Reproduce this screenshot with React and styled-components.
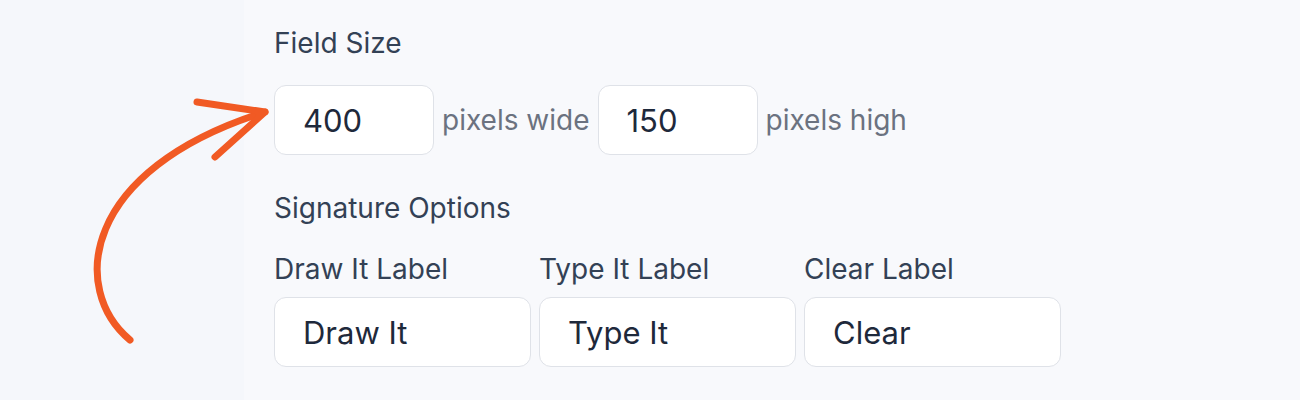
import React from 'react'
import styled, { createGlobalStyle } from 'styled-components'

const GlobalStyle = createGlobalStyle`
  html, body {
    margin: 0;
    padding: 0;
    background: #f8f9fc;
    font-family: Inter, "Noto Sans", sans-serif;
  }
`

const Page = styled.div`
  position: relative;
  display: flex;
  height: 400px;
  overflow: hidden;
`

const SidePane = styled.div`
  width: 244px;
  flex-shrink: 0;
  background: #f5f7fb;
`

const Main = styled.div`
  flex: 1;
  display: flex;
  flex-direction: column;
  padding: 26px 0 0 30px;
`

const Arrow = styled.svg`
  position: absolute;
  left: 0;
  top: 0;
  pointer-events: none;
`

const SectionLabel = styled.div`
  font-size: 28px;
  line-height: 34px;
  color: #334155;
  margin-top: ${(p) => p.$top || 0}px;
  margin-bottom: ${(p) => p.$gap || 0}px;
`

const Row = styled.div`
  display: flex;
  align-items: center;
  gap: 8px;
`

const Field = styled.div`
  display: flex;
  flex-direction: column;
  gap: 11px;
`

const Input = styled.input`
  box-sizing: border-box;
  width: ${(p) => p.$w}px;
  height: 70px;
  padding: 0 0 0 28px;
  border: 1.5px solid #dfe2e8;
  border-radius: 12px;
  background: #fff;
  font-family: Inter, "Noto Sans", sans-serif;
  font-size: 31px;
  color: #1e293b;
  outline: none;
`

const Unit = styled.span`
  font-size: 28px;
  color: #6b7280;
`

const Fields = styled.div`
  display: flex;
  gap: 8px;
  margin-top: 27px;
`

export default function App() {
  return (
    <>
      <GlobalStyle />
      <Page>
        <SidePane />
        <Main>
          <SectionLabel $gap={25}>Field Size</SectionLabel>
          <Row>
            <Input $w={160} defaultValue="400" />
            <Unit>pixels wide</Unit>
            <Input $w={160} defaultValue="150" />
            <Unit>pixels high</Unit>
          </Row>
          <SectionLabel $top={36}>Signature Options</SectionLabel>
          <Fields>
            {['Draw It', 'Type It', 'Clear'].map((name) => (
              <Field key={name}>
                <SectionLabel>{name} Label</SectionLabel>
                <Input $w={257} defaultValue={name} />
              </Field>
            ))}
          </Fields>
        </Main>
        <Arrow width="300" height="400" viewBox="0 0 300 400">
          <g fill="none" stroke="#f15a24" strokeWidth="7" strokeLinecap="round" strokeLinejoin="round">
            <path d="M130 340 C 70 290 80 170 265 112" />
            <path d="M197 102 L 265 112 L 215 157" />
          </g>
        </Arrow>
      </Page>
    </>
  )
}
